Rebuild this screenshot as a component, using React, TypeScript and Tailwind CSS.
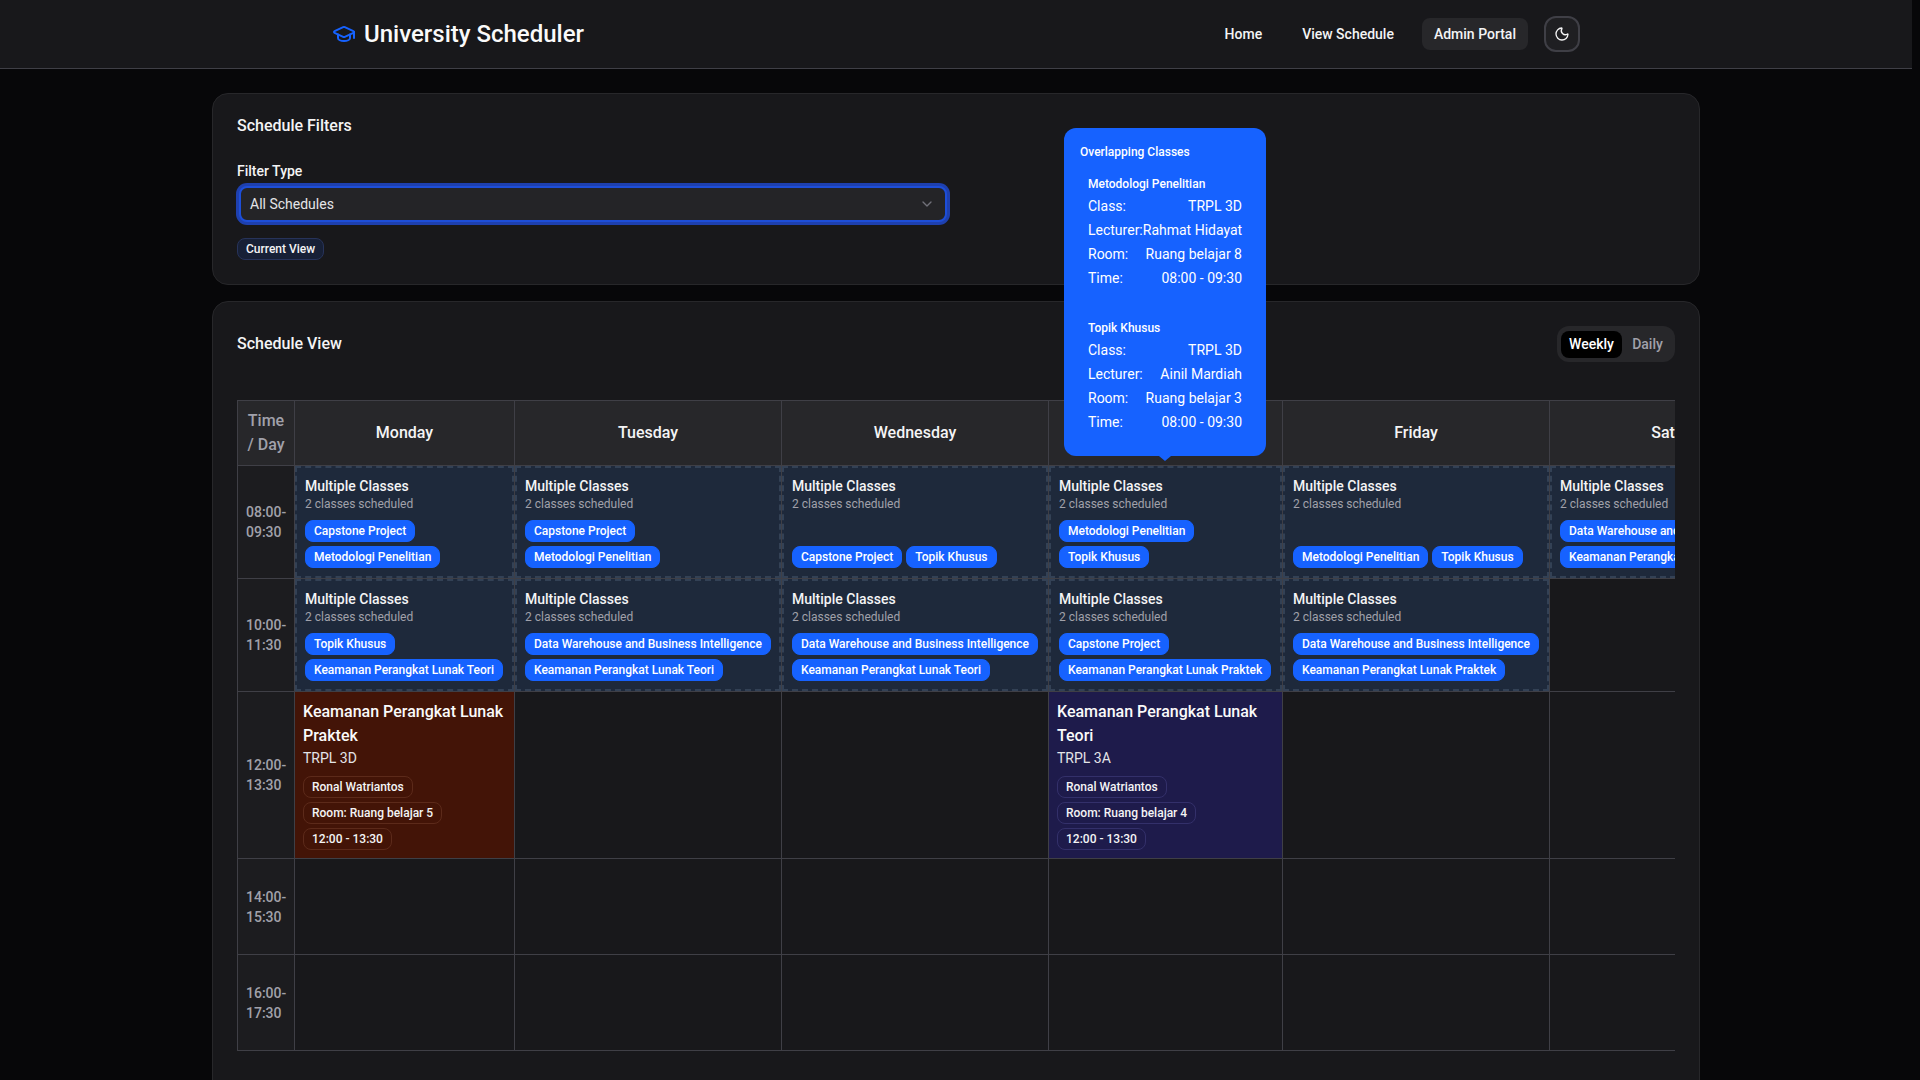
import { ChevronDown, GraduationCap, Moon } from "lucide-react";

const capstone = "Capstone Project";
const metodologi = "Metodologi Penelitian";
const topik = "Topik Khusus";
const dataWarehouse = "Data Warehouse and Business Intelligence";
const teori = "Keamanan Perangkat Lunak Teori";
const praktek = "Keamanan Perangkat Lunak Praktek";

const days = ["Monday", "Tuesday", "Wednesday", "Thursday", "Friday", "Saturday"];

const morning = [
  [capstone, metodologi],
  [capstone, metodologi],
  [capstone, topik],
  [metodologi, topik],
  [metodologi, topik],
  [dataWarehouse, praktek],
];

const midMorning = [
  [topik, teori],
  [dataWarehouse, teori],
  [dataWarehouse, teori],
  [capstone, praktek],
  [dataWarehouse, praktek],
  null,
];

const cellBorder = "border border-[#3f3f46]";

function TimeCell({ label, height }: { label: string; height: string }) {
  return (
    <td className={`${cellBorder} ${height} bg-[#1c1c1f] p-2 pr-0 text-sm font-medium text-[#a1a1aa]`}>{label}</td>
  );
}

function MultiCell({ subjects }: { subjects: string[] | null }) {
  if (!subjects) return <td className={cellBorder} />;
  return (
    <td className={`${cellBorder} bg-[#1e293b] p-0 align-top`}>
      <div className="flex h-[112px] flex-col border-2 border-dashed border-[#334155] p-2">
        <p className="text-sm leading-5 font-medium text-[#f4f4f5]">Multiple Classes</p>
        <p className="text-xs leading-4 text-[#a1a1aa]">2 classes scheduled</p>
        <div className="mt-auto flex flex-wrap gap-1">
          {subjects.map((subject) => (
            <span key={subject} className="flex h-[22px] items-center rounded-lg border border-[#1662ff] bg-[#1662ff] px-2 text-xs font-medium whitespace-nowrap text-white">
              {subject}
            </span>
          ))}
        </div>
      </div>
    </td>
  );
}

function ClassCell({ title, group, room, bg, line }: { title: string; group: string; room: string; bg: string; line: string }) {
  return (
    <td className={`${cellBorder} ${bg} px-2 py-2 align-top`}>
      <p className="text-base leading-6 font-medium text-[#fafafa]">{title}</p>
      <p className="text-sm leading-5 text-[#e4e4e7]">{group}</p>
      <div className="mt-2 flex flex-col items-start gap-1">
        {["Ronal Watriantos", room, "12:00 - 13:30"].map((item) => (
          <span key={item} className={`flex h-[22px] items-center rounded-lg border ${line} px-2 text-xs font-medium whitespace-nowrap text-[#f4f4f5]`}>
            {item}
          </span>
        ))}
      </div>
    </td>
  );
}

function TooltipClass({ name, lecturer, room }: { name: string; lecturer: string; room: string }) {
  const rows = [
    ["Class:", "TRPL 3D"],
    ["Lecturer:", lecturer],
    ["Room:", room],
    ["Time:", "08:00 - 09:30"],
  ];
  return (
    <div className="px-2">
      <p className="mb-[2px] text-xs leading-4 font-medium">{name}</p>
      {rows.map(([label, value]) => (
        <div key={label} className="flex h-6 items-center justify-between text-sm whitespace-nowrap">
          <span>{label}</span>
          <span>{value}</span>
        </div>
      ))}
    </div>
  );
}

export default function App() {
  return (
    <div className="h-screen overflow-hidden bg-[#070709] font-['Roboto',sans-serif] text-white">
      <div className="w-[1912px]">
        <header className="h-[69px] border-b border-[#3f3f46] bg-[#18181b]">
          <div className="mx-auto flex h-[68px] max-w-7xl items-center justify-between px-4">
            <div className="flex items-center gap-2">
              <GraduationCap className="h-6 w-6 text-[#1662ff]" />
              <span className="text-2xl font-medium text-[#fafafa]">University Scheduler</span>
            </div>
            <nav className="flex items-center gap-4 text-sm font-medium text-[#f4f4f5]">
              <a className="flex h-8 items-center px-3">Home</a>
              <a className="flex h-8 items-center px-3">View Schedule</a>
              <a className="flex h-8 items-center rounded-lg bg-[#27272a] px-3">Admin Portal</a>
              <button className="flex h-9 w-9 items-center justify-center rounded-xl border-2 border-[#3f3f46] bg-[#1f1f22]">
                <Moon className="h-4 w-4" />
              </button>
            </nav>
          </div>
        </header>

        <main className="relative mx-auto max-w-[1536px] space-y-4 px-6 pt-6">
          <section className="rounded-2xl border border-[#27272a] bg-[#18181b] px-6 pt-5 pb-6">
            <h2 className="text-base leading-6 font-medium text-[#f4f4f5]">Schedule Filters</h2>
            <label className="mt-[23px] block text-sm leading-5 font-medium text-[#f4f4f5]">Filter Type</label>
            <div className="mt-[5px] ml-[2px] flex h-9 w-[708px] items-center justify-between rounded-lg border-2 border-[#1d4ed8] bg-[#242427] pr-[10px] pl-[9px] text-sm text-[#e4e4e7] ring-[3px] ring-[#1e40af]">
              All Schedules
              <ChevronDown className="h-4 w-4 text-[#71717a]" />
            </div>
            <span className="mt-4 flex h-[22px] w-fit items-center rounded-lg border border-[#27335a] bg-[#172036] px-2 text-xs font-medium text-[#f4f4f5]">
              Current View
            </span>
          </section>

          <section className="rounded-2xl border border-[#27272a] bg-[#18181b] px-6 pt-6 pb-[50px]">
            <div className="mb-[38px] flex items-center justify-between">
              <h2 className="text-base leading-6 font-medium text-[#f4f4f5]">Schedule View</h2>
              <div className="flex h-9 items-center rounded-xl bg-[#27272a] px-1 text-sm font-medium">
                <span className="flex h-[27px] w-[61px] items-center justify-center rounded-lg bg-black">Weekly</span>
                <span className="flex h-[27px] w-[49px] items-center justify-center pl-[2px] text-[#a1a1aa]">Daily</span>
              </div>
            </div>

            <div className="overflow-x-hidden">
              <table className="w-[1579px] table-fixed border-collapse">
                <colgroup>
                  <col className="w-[57px]" />
                  <col className="w-[220px]" />
                  <col className="w-[267px]" />
                  <col className="w-[267px]" />
                  <col className="w-[234px]" />
                  <col className="w-[267px]" />
                  <col className="w-[267px]" />
                </colgroup>
                <thead>
                  <tr className="h-[65px] bg-[#27272a]">
                    <th className={`${cellBorder} px-2 text-base leading-6 font-medium text-[#a1a1aa]`}>Time / Day</th>
                    {days.map((day) => (
                      <th key={day} className={`${cellBorder} text-base font-medium text-[#f4f4f5]`}>{day}</th>
                    ))}
                  </tr>
                </thead>
                <tbody>
                  <tr>
                    <TimeCell label="08:00-09:30" height="h-[113px]" />
                    {morning.map((subjects, index) => <MultiCell key={index} subjects={subjects} />)}
                  </tr>
                  <tr>
                    <TimeCell label="10:00-11:30" height="h-[113px]" />
                    {midMorning.map((subjects, index) => <MultiCell key={index} subjects={subjects} />)}
                  </tr>
                  <tr>
                    <TimeCell label="12:00-13:30" height="h-[167px]" />
                    <ClassCell title="Keamanan Perangkat Lunak Praktek" group="TRPL 3D" room="Room: Ruang belajar 5" bg="bg-[#431407]" line="border-[#5c2a1a]" />
                    <td className={cellBorder} />
                    <td className={cellBorder} />
                    <ClassCell title="Keamanan Perangkat Lunak Teori" group="TRPL 3A" room="Room: Ruang belajar 4" bg="bg-[#1e1b4b]" line="border-[#33306a]" />
                    <td className={cellBorder} />
                    <td className={cellBorder} />
                  </tr>
                  {["14:00-15:30", "16:00-17:30"].map((slot) => (
                    <tr key={slot}>
                      <TimeCell label={slot} height="h-[96px]" />
                      {days.map((day) => <td key={day} className={cellBorder} />)}
                    </tr>
                  ))}
                </tbody>
              </table>
            </div>
          </section>

          {/* tooltip of the hovered Thursday cell */}
          <div className="absolute top-[59px] left-[876px] z-10 h-[328px] w-[202px] rounded-xl bg-[#1662ff] px-4 pt-4 text-white">
            <p className="mb-4 text-xs leading-4 font-medium">Overlapping Classes</p>
            <TooltipClass name="Metodologi Penelitian" lecturer="Rahmat Hidayat" room="Ruang belajar 8" />
            <div className="h-[30px]" />
            <TooltipClass name="Topik Khusus" lecturer="Ainil Mardiah" room="Ruang belajar 3" />
            <span className="absolute -bottom-[5px] left-1/2 h-0 w-0 -translate-x-1/2 border-x-[6px] border-t-[5px] border-x-transparent border-t-[#1662ff]" />
          </div>
        </main>
      </div>
    </div>
  );
}
